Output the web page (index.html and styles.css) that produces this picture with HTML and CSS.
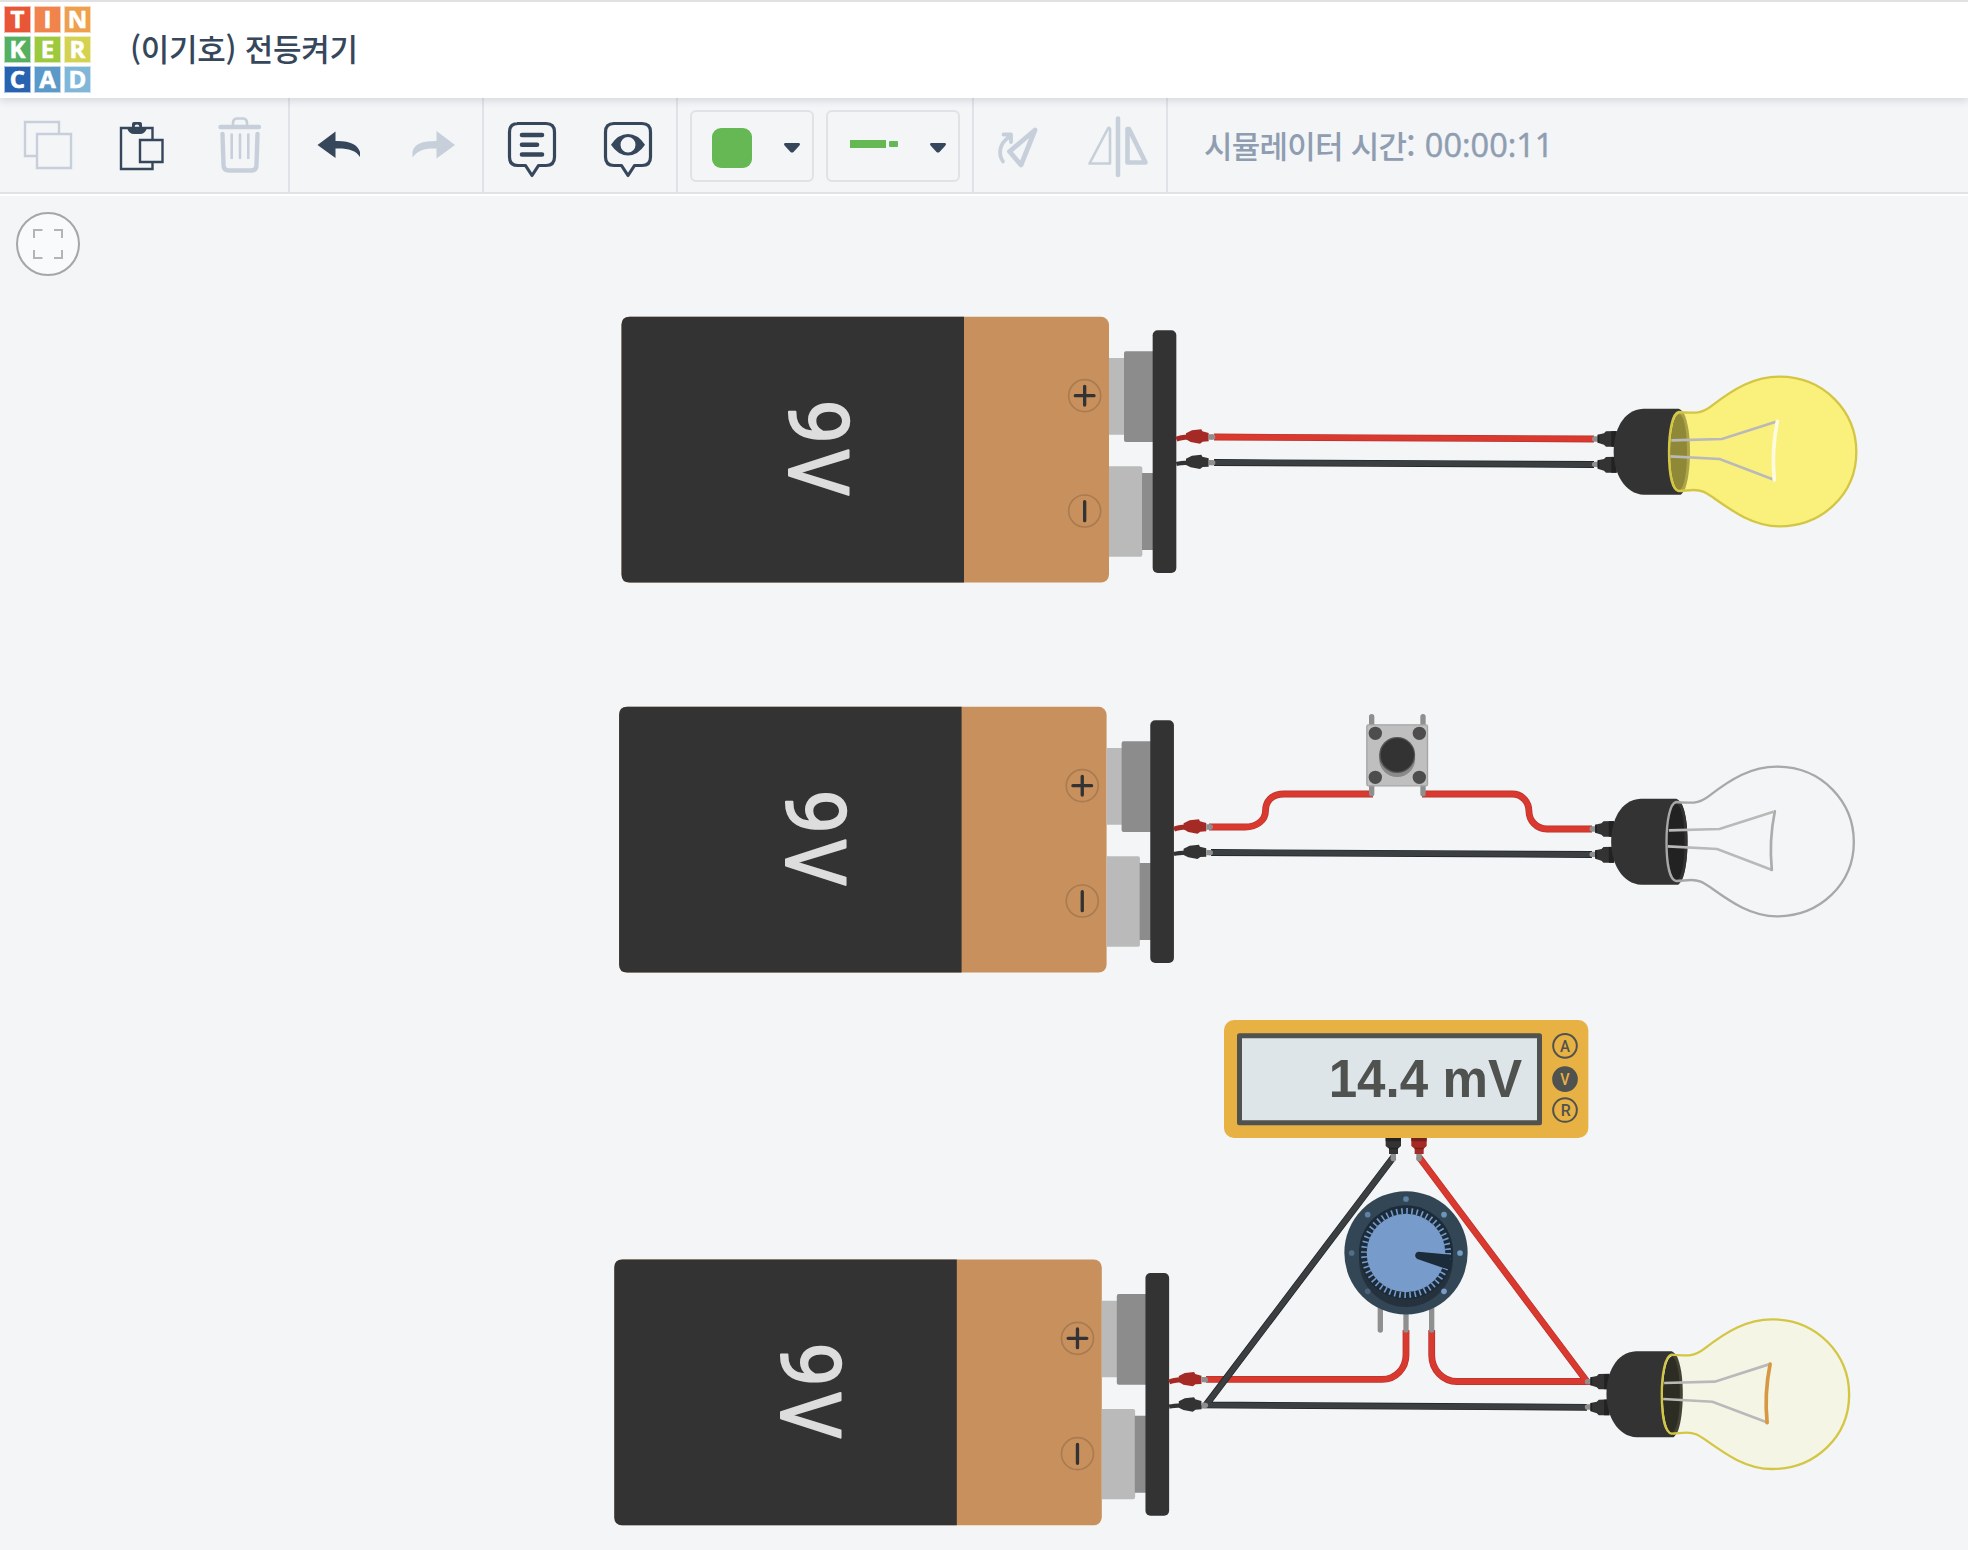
FILE: index.html
```html
<!DOCTYPE html>
<html lang="ko">
<head>
<meta charset="utf-8">
<title>(이기호) 전등켜기</title>
<link rel="stylesheet" href="styles.css">
</head>
<body>
<header class="header">
  <div class="logo">
    <span class="t1">T</span><span class="t2">I</span><span class="t3">N</span>
    <span class="t4">K</span><span class="t5">E</span><span class="t6">R</span>
    <span class="t7">C</span><span class="t8">A</span><span class="t9">D</span>
  </div>
  <h1 class="title">(이기호) 전등켜기</h1>
</header>
<nav class="toolbar">
  <div class="group">
    <button class="tool off"><svg viewBox="0 98 96 94"><path d="M36 155H25V121H59V134M37 133H71V167H37Z" transform="translate(0 1)" fill="none" stroke="currentColor" stroke-width="2.400"/></svg></button>
    <button class="tool"><svg viewBox="96 98 96 94"><path d="M152.500 139V128H121V169H152.500V162M140 140H162.500V162H140Z" fill="none" stroke="currentColor" stroke-width="2.400"/><path fill="currentColor" fill-rule="evenodd" d="M127 128H132V124Q132 122 134 122H140Q142 122 142 124V128H147Q145 134 140 134H134Q129 134 127 128ZM137 124.500A2.300 2.300 0 1 0 137 129.200A2.300 2.300 0 1 0 137 124.500Z"/></svg></button>
    <button class="tool off"><svg viewBox="192 98 96 94"><g fill="none" stroke="currentColor" stroke-linecap="round"><path stroke-width="4.400" d="M220.500 127H259M222.500 134L223.500 165Q223.500 170.500 229 170.500H251Q256.500 170.500 256.500 165L257.500 134"/><path stroke-width="2.600" d="M233 125V123Q233 118.500 237.500 118.500H242.500Q247 118.500 247 123V125M231.700 134.500V158M240 134.500V158M248.300 134.500V158"/></g></svg></button>
  </div>
  <div class="group">
    <button class="tool"><svg viewBox="290 98 96 94"><path fill="currentColor" d="M317.500 145L335.500 131.500V141C350 140.500 358 145 360 152V157C356 150 347 148 335.500 148.500V158Z"/></svg></button>
    <button class="tool off"><svg viewBox="386 98 96 94"><path fill="currentColor" d="M455 145L436.500 131V141C422 141 414 144 412.500 152V157.500C418 150 425 148 436.500 148.500V158.500Z"/></svg></button>
  </div>
  <div class="group">
    <button class="tool"><svg viewBox="484 98 96 94"><path fill="none" stroke="currentColor" stroke-width="3.200" stroke-linejoin="round" d="M517 123.500H546Q554.500 123.500 554.500 132V157Q554.500 165.500 546 165.500H538.500L532 175.500L525.500 165.500H518Q509.500 165.500 509.500 157V132Q509.500 123.500 518 123.500"/><path stroke="currentColor" stroke-width="4.600" stroke-linecap="round" d="M522 135H542M522 144.800H537M522 154.500H542"/></svg></button>
    <button class="tool"><svg viewBox="580 98 96 94"><path fill="none" stroke="currentColor" stroke-width="3.200" stroke-linejoin="round" d="M613 123.500H642Q650.500 123.500 650.500 132V157Q650.500 165.500 642 165.500H634.500L628 175.500L621.500 165.500H614Q605.500 165.500 605.500 157V132Q605.500 123.500 614 123.500"/><path fill="currentColor" fill-rule="evenodd" d="M611 144.800Q618 134 628 134T645 144.800Q638 155.500 628 155.500T611 144.800ZM628 137A7.500 7.800 0 1 0 628 152.600A7.500 7.800 0 1 0 628 137Z"/></svg></button>
  </div>
  <div class="group pickers">
    <button class="picker color"><span class="swatch"></span><svg class="caret" viewBox="0 0 16 10"><path d="M1 0H15Q17 1 15 3L9.500 9Q8 10 6.500 9L1 3Q-1 1 1 0Z"/></svg></button>
    <button class="picker wire"><span class="wire-icon"><i></i><b></b></span><svg class="caret" viewBox="0 0 16 10"><path d="M1 0H15Q17 1 15 3L9.500 9Q8 10 6.500 9L1 3Q-1 1 1 0Z"/></svg></button>
  </div>
  <div class="group">
    <button class="tool off"><svg viewBox="974 98 96 94"><g fill="none" stroke="currentColor" stroke-linecap="round" stroke-linejoin="round"><path stroke-width="4.800" d="M1035 130L1009.500 151.500L1021 165Z"/><path stroke-width="3.800" d="M1003 161.500C998 154 999 144 1009 137M1003.500 134.500H1011V142"/></g></svg></button>
    <button class="tool off"><svg viewBox="1070 98 96 94"><g fill="none" stroke="currentColor" stroke-linecap="round" stroke-linejoin="round"><path stroke-width="4.500" d="M1118 118.500V175"/><path stroke-width="2.600" d="M1108 128.500L1089.500 163.500H1110V129Q1109 127 1108 128.500"/><path stroke-width="4.600" d="M1127.500 129V162.500H1145.500L1129 129Z"/></g></svg></button>
  </div>
  <div class="timer"><span class="label">시뮬레이터 시간:</span> <span class="digits">00:00:11</span></div>
</nav>
<main class="canvas">
<svg class="scene" viewBox="0 196 1968 1354">
  <defs>
    <path id="glass-shape" d="M326 156C345 159 362 158 379 158C400 156 411 149 426 137C492 86 552 50 628 50C764 50 859 156 859 276C859 402 757 499 628 499C549 499 488 454 426 410C405 396 395 390 371 390C355 390 342 393 326 393C306 389 297 339 297 275C297 216 307 159 326 156Z"/>
    <g id="battery">
      <rect x="621.500" y="316.800" width="487.500" height="265.800" rx="8" fill="#c8905c"/>
      <path d="M964 316.800H629.500Q621.500 316.800 621.500 324.800V574.600Q621.500 582.600 629.500 582.600H964Z" fill="#333"/>
      <g class="volt" transform="translate(788.500 401) rotate(90)">
        <text x="-1" y="0" textLength="44" lengthAdjust="spacingAndGlyphs">9</text>
        <text x="48" y="0" textLength="47" lengthAdjust="spacingAndGlyphs">V</text>
      </g>
      <g transform="translate(1040 300) scale(.33333)">
        <path d="M207 174H253V404H207Z M207 499H301Q307 499 307 505V764Q307 770 301 770H207Z" fill="#bababa"/>
        <path d="M340 154H258Q252 154 252 160V420Q252 426 258 426H340Z M306 519H340V750H306Z" fill="#8c8c8c"/>
        <rect x="338" y="91" width="71" height="728" rx="15" fill="#333"/>
        <g fill="none" stroke="#a97b50" stroke-width="5"><circle cx="134" cy="287" r="48"/><circle cx="134" cy="633" r="48"/></g>
        <path d="M106 287H162M134 259V315M134 605V662" stroke="#333" stroke-width="10" stroke-linecap="round"/>
        <path d="M409 418Q422 412 446 411" fill="none" stroke="#a52a26" stroke-width="15"/>
        <path d="M438 400L456 391L484 388L487 394L506 399V424L488 425L480 431L452 426L438 418Z" fill="#a52a26"/>
        <path d="M409 492Q422 489 446 488" fill="none" stroke="#333" stroke-width="13"/>
        <path d="M438 476L456 467L484 464L487 470L506 475V500L488 501L480 507L452 502L438 495Z" fill="#333"/>
        <path d="M506 411H518M506 488H518" stroke="#8f8f8f" stroke-width="16"/>
        <circle cx="518" cy="411" r="8" fill="#8f8f8f"/><circle cx="518" cy="488" r="8" fill="#8f8f8f"/>
      </g>
    </g>
    <g id="bulb" transform="translate(1570 360) scale(.33333)">
      <path d="M74 237H88M74 313H88" stroke="#8f8f8f" stroke-width="16" stroke-linecap="round"/>
      <path d="M83 224L102 220L108 214L140 213V260H108L102 254L83 248ZM83 301L102 297L108 291L140 290V338H108L102 332L83 326Z" fill="#333"/>
      <path d="M124 214H140V260H124ZM124 291H140V338H124ZM83 224H88V248H83ZM83 301H88V325H83Z" fill="#222"/>
      <path d="M326 146H220C158 149 131 213 131 275C131 340 164 402 222 404H332C350 390 360 335 360 275C360 215 352 155 326 146Z" fill="#333"/>
      <use class="glass" href="#glass-shape"/>
      <path class="lip" d="M326 158H341C354 185 360 225 360 275C360 325 353 370 343 391H326Z"/>
      <path class="throat" d="M326 162C344 164 351 220 351 278C351 335 342 390 326 391C310 387 300 335 300 276C300 220 311 163 326 162Z"/>
      <use class="rim" href="#glass-shape"/>
      <path d="M304 241L456 237L618 185M301 289L449 297L612 359" fill="none" stroke="#b9b9b9" stroke-width="8"/>
      <path class="filament" fill="none" stroke-linecap="round" d="M622 184Q604 273 613 360"/>
    </g>
    <g id="red-wires">
      <path d="M1214 437L1594 439"/>
      <path d="M1209 827H1245C1257 827 1265.500 820 1265.500 811S1271 794 1284 794H1373"/>
      <path d="M1422 794H1512C1523 794 1529 803 1529 811.500S1536 829 1547 829H1592"/>
      <path d="M1206 1379.400H1382C1396 1379.400 1406 1368 1406 1355V1330"/>
      <path d="M1431.700 1330V1355C1431.700 1370 1443 1381.500 1457 1381.500H1587L1419 1157"/>
    </g>
    <g id="black-wires">
      <path d="M1214 462.500L1594 464.500"/>
      <path d="M1211 852.500L1592 854.500"/>
      <path d="M1587 1407.300L1206 1405L1393.500 1157"/>
    </g>
  </defs>

  <g class="wires">
    <use class="red edge" href="#red-wires"/><use class="red" href="#red-wires"/>
    <use class="black edge" href="#black-wires"/><use class="black" href="#black-wires"/>
  </g>

  <use href="#battery"/>
  <use href="#battery" x="-2.400" y="390"/>
  <use href="#battery" x="-7.200" y="942.700"/>
  <use class="bright" href="#bulb"/>
  <use class="unlit" href="#bulb" x="-2.500" y="390"/>
  <use class="dim" href="#bulb" x="-7.200" y="942.700"/>

  <!-- push button -->
  <g transform="translate(1340 700) scale(.33333)">
    <path d="M95 50V80M249 50V80M95 250V281M249 250V281" stroke="#8f8f8f" stroke-width="16" stroke-linecap="round"/>
    <rect x="80.500" y="74.500" width="182" height="183" rx="5" fill="#bfbfbf" stroke="#a5a5a5" stroke-width="4"/>
    <g fill="#4d4d4d"><circle cx="106" cy="100" r="20"/><circle cx="238" cy="100" r="20"/><circle cx="106" cy="232" r="20"/><circle cx="238" cy="232" r="20"/></g>
    <circle cx="171.500" cy="177" r="54" fill="#8a8a8a"/><circle cx="171.500" cy="165" r="54" fill="#555"/>
    <circle cx="172" cy="165" r="50" fill="#333"/>
  </g>

  <!-- multimeter -->
  <g transform="translate(1210 1010) scale(.33333)">
    <path d="M527 380H573V408L564 416V432H537V416L527 408Z" fill="#333"/><path d="M527 384H573V394H527ZM537 413H564V418H537Z" fill="#222"/>
    <path d="M604 380H650V408L641 416V432H614V416L604 408Z" fill="#a52a26"/><path d="M604 384H650V394H604ZM614 413H641V418H614Z" fill="#76201d"/>
    <path d="M550 432V446M627 432V446" stroke="#8f8f8f" stroke-width="16"/>
    <circle cx="550" cy="446" r="8" fill="#8f8f8f"/><circle cx="627" cy="446" r="8" fill="#8f8f8f"/>
    <rect x="42" y="30" width="1093" height="354" rx="30" fill="#e8b143"/>
    <rect x="88.500" y="77" width="900" height="261" fill="#dde5e8" stroke="#50524f" stroke-width="15" stroke-linejoin="round"/>
    <text class="reading" x="936" y="262" textLength="580" lengthAdjust="spacingAndGlyphs">14.4 mV</text>
    <g fill="none" stroke="#50524f" stroke-width="6"><circle cx="1065" cy="107.500" r="35.500"/><circle cx="1065" cy="207.500" r="35.500" fill="#50524f"/><circle cx="1065" cy="300" r="35.500"/></g>
    <g class="mode"><text x="1065" y="126" textLength="30" lengthAdjust="spacingAndGlyphs">A</text><text class="on" x="1065" y="226" textLength="28" lengthAdjust="spacingAndGlyphs">V</text><text x="1067" y="318" textLength="30" lengthAdjust="spacingAndGlyphs">R</text></g>
  </g>

  <!-- potentiometer -->
  <g transform="translate(1330 1170) scale(.33333)">
    <path d="M151 400V480M228 400V480M305 400V480" stroke="#8f8f8f" stroke-width="16" stroke-linecap="round"/>
    <circle cx="228" cy="248.500" r="185" fill="#334655"/>
    <circle cx="228" cy="270" r="141" fill="#25323e"/>
    <circle cx="228" cy="247" r="141" fill="#1b2b39"/>
    <circle cx="228" cy="249" r="118" fill="#779bca"/>
    <circle cx="228" cy="249" r="126" fill="none" stroke="#779bca" stroke-width="18" pathLength="520" stroke-dasharray="3.200 6.800"/>
    <path d="M265 245L362 254V300L334 292L262 267Q254 262 256 253Q258 245 265 245Z" fill="#1b2b39"/>
    <g fill="#5d82a6"><circle cx="228" cy="87" r="8.500"/><circle cx="113" cy="134" r="8.500"/><circle cx="342" cy="134" r="8.500" fill="#6b96b8"/><circle cx="390" cy="249" r="8.500" fill="#739dc5"/><circle cx="342" cy="364" r="8.500" fill="#779bca"/><circle cx="65" cy="249" r="8.500" fill="#506f88"/><circle cx="113" cy="364" r="8.500" fill="#4a637a"/></g>
  </g>
</svg>
<button class="fit"><svg viewBox="16 212 64 64"><circle cx="48" cy="244" r="31" fill="#f9fafc" stroke="#a6a6a9" stroke-width="2"/><path d="M34 238V230H42.500M54 230H62V238M62 250V258H54M42.500 258H34V250" fill="none" stroke="#b3b5b4" stroke-width="2"/></svg></button>
</main>
</body>
</html>
```
FILE: styles.css
```css
* { box-sizing: border-box; }
body {
  margin: 0;
  width: 1968px;
  height: 1550px;
  display: flex;
  flex-direction: column;
  overflow: hidden;
  background: #f3f5f7;
  font-family: "Open Sans", "Noto Sans CJK KR", sans-serif;
}
button { padding: 0; border: 0; background: none; color: inherit; font: inherit; }
svg { display: block; }

.header {
  flex: none;
  height: 98px;
  display: flex;
  align-items: center;
  gap: 39px;
  padding-left: 4px;
  background: #fff;
  border-top: 2px solid #e1e1e1;
  box-shadow: 0 2px 8px rgba(50, 70, 90, .18);
  position: relative;
}
.logo { display: grid; grid-template-columns: repeat(3, 27px); grid-auto-rows: 27px; gap: 3px; padding-bottom: 1px; }
.logo span {
  display: flex;
  align-items: center;
  justify-content: center;
  border: 1px solid rgba(255, 255, 255, .6);
  color: #fff;
  font: 700 24px/24px "Open Sans", sans-serif;
  padding-bottom: 1px;
  -webkit-text-stroke: .6px #fff;
}
.t1 { background: #e95537; } .t2 { background: #f0844c; } .t3 { background: #eea04f; }
.t4 { background: #56b062; } .t5 { background: #9dc93f; } .t6 { background: #d4d250; }
.t7 { background: #2863b1; } .t8 { background: #5b99c9; } .t9 { background: #80b7d9; }
.title {
  margin: 0;
  padding-bottom: 4px;
  color: #36475c;
  font: 500 31px/44px "Noto Sans CJK KR", sans-serif;
  letter-spacing: -.25px;
}

.toolbar {
  flex: none;
  height: 98px;
  display: flex;
  border-bottom: 2px solid #fff;
  box-shadow: inset 0 -2px 0 #e0e2e8;
  color: #36475c;
}
.group { display: flex; height: 94px; border-right: 2px solid #dfe2e8; }
.tool { width: 96px; height: 94px; }
.tool svg { width: 96px; height: 94px; }
.off { color: #c7d0da; }
.pickers { gap: 12px; padding: 12px 12px 0; }
.picker {
  height: 72px;
  display: flex;
  align-items: center;
  justify-content: space-between;
  border: 2px solid #e0e2e6;
  border-radius: 6px;
}
.color { width: 124px; padding: 4px 12px 0 20px; }
.wire { width: 134px; padding: 4px 12px 0 22px; }
.swatch { width: 40px; height: 40px; border-radius: 9px; background: #66b855; }
.caret { width: 16px; height: 10px; fill: #36475c; }
.wire-icon { display: flex; align-items: center; gap: 3px; padding-bottom: 8px; }
.wire-icon i { width: 36px; height: 8px; background: #66b855; }
.wire-icon b { width: 9px; height: 6px; border-radius: 1px; background: #66b855; }
.timer {
  padding-left: 36px;
  display: flex;
  align-items: center;
  gap: 10px;
  height: 94px;
  color: #8f9db1;
  font: 500 31px/44px "Noto Sans CJK KR", sans-serif;
}
.label { letter-spacing: -.75px; padding-bottom: 1px; }
.digits { font: 400 32.5px/44px "Open Sans", sans-serif; -webkit-text-stroke: .5px #8f9db1; }

.canvas { flex: 1; position: relative; }
.scene { width: 1968px; height: 1354px; }
.fit { position: absolute; left: 16px; top: 16px; width: 64px; height: 64px; }

.wires { fill: none; }
.wires use { stroke-width: 5.4; }
.red { stroke: #da392f; }
.black { stroke: #3b3f41; }
.wires .edge { stroke-width: 6.8; }
.red.edge { stroke: #b8332b; }
.black.edge { stroke: #1f2223; }
.volt { font: 400 84px Roboto, sans-serif; fill: #ddd; stroke: #ddd; stroke-width: 2; stroke-linejoin: round; }
.reading { font: 700 159px "Liberation Sans", Arial, sans-serif; fill: #50524f; text-anchor: end; }
.mode { font: 500 50px Roboto, sans-serif; fill: #50524f; text-anchor: middle; }
.mode .on { fill: #e8b143; }

.glass { fill: var(--glass); }
.rim { fill: none; stroke: var(--rim); stroke-width: 7px; }
.throat { fill: var(--throat); }
.lip { fill: var(--lip); }
.filament { stroke: var(--filament); stroke-width: var(--filament-width); }
.bright { --glass: #faf07c; --rim: #d4c645; --throat: #8f8836; --lip: #ada34a; --filament: #fffbe0; --filament-width: 11; }
.unlit { --glass: transparent; --rim: #a8a8a8; --throat: #222; --lip: #333; --filament: #acacac; --filament-width: 8; }
.dim { --glass: #f5f5e6; --rim: #d4c645; --throat: #2e2d24; --lip: #434234; --filament: #d69843; --filament-width: 11; }
```
